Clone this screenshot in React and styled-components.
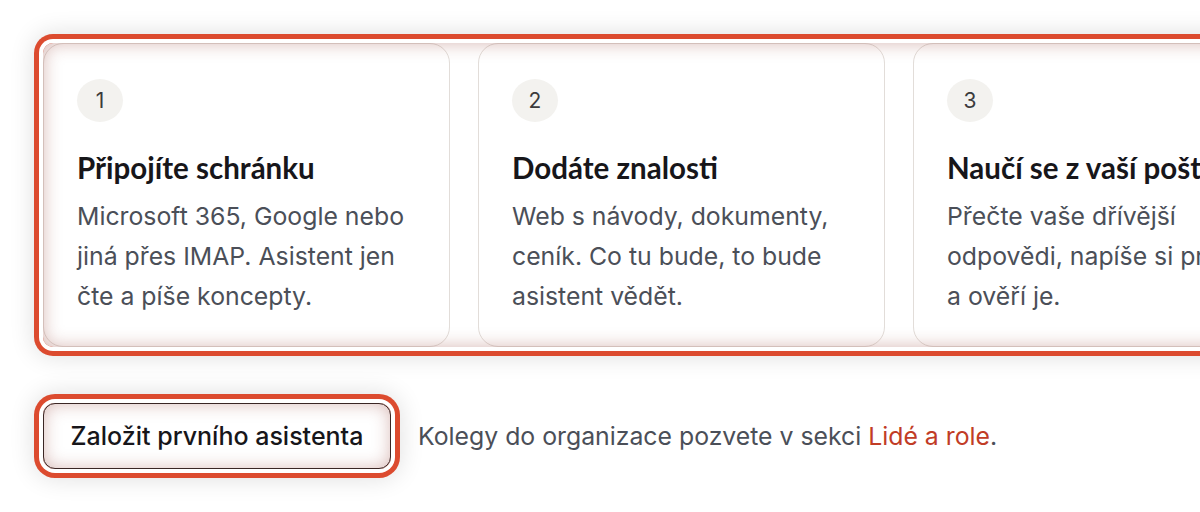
import React from "react";
import styled, { createGlobalStyle } from "styled-components";

const Global = createGlobalStyle`
  html, body { margin: 0; padding: 0; background: #ffffff; overflow: hidden; }
  body { font-family: Inter, "Noto Sans", sans-serif; width: 1200px; height: 512px; }
`;

const Page = styled.div`
  padding: 43px 0 0 43px;
  display: flex;
  flex-direction: column;
  gap: 56px;
  width: 1400px;
`;

const Highlight = styled.div`
  position: relative;
  border-radius: ${(p) => p.$radius || 10}px;
  box-shadow: 0 0 0 4px #ffffff, 0 0 0 9px #dc4b2f, 0 0 24px 10px rgba(0, 0, 0, 0.12);
  &::after {
    content: "";
    position: absolute;
    inset: 0;
    border-radius: inherit;
    pointer-events: none;
    box-shadow: inset 0 0 18px rgba(140, 50, 40, 0.36);
  }
`;

const Steps = styled(Highlight)`
  display: grid;
  grid-template-columns: repeat(3, 407px);
  gap: 28px;
  width: max-content;
`;

const Card = styled.div`
  background: #ffffff;
  border: 1px solid #e2ddd9;
  border-radius: 20px;
  padding: 35px 33px 30px;
  height: 304px;
  box-sizing: border-box;
  display: flex;
  flex-direction: column;
`;

const Num = styled.div`
  width: 46px;
  height: 46px;
  border-radius: 50%;
  background: #f3f2ef;
  display: flex;
  align-items: center;
  justify-content: center;
  font-size: 21px;
  color: #3b3b3d;
  font-family: Inter, sans-serif;
`;

const Title = styled.h3`
  margin: 28px 0 0;
  font-family: Lato, "Noto Sans", sans-serif;
  font-weight: 700;
  font-size: 29.5px;
  line-height: 36px;
  color: #17161a;
  white-space: nowrap;
`;

const Text = styled.p`
  margin: 10px 0 0;
  font-size: 24.8px;
  line-height: 40px;
  color: #4b4f58;
`;

const Footer = styled.div`
  display: flex;
  align-items: center;
  gap: 27px;
`;

const ButtonWrap = styled(Highlight)`
  border-radius: 12px;
`;

const Button = styled.button`
  display: block;
  height: 66px;
  width: 348px;
  padding: 0;
  border: 1.5px solid #2a2525;
  border-radius: 12px;
  background: #ffffff;
  font-family: Inter, sans-serif;
  font-weight: 500;
  font-size: 25px;
  color: #17161a;
  cursor: pointer;
`;

const Note = styled.p`
  margin: 0;
  font-size: 24.8px;
  color: #4b4f58;
`;

const Link = styled.a`
  color: #c13c26;
  text-decoration: none;
`;

const steps = [
  {
    n: 1,
    title: "Připojíte schránku",
    text: "Microsoft 365, Google nebo jiná přes IMAP. Asistent jen čte a píše koncepty.",
  },
  {
    n: 2,
    title: "Dodáte znalosti",
    text: "Web s návody, dokumenty, ceník. Co tu bude, to bude asistent vědět.",
  },
  {
    n: 3,
    title: "Naučí se z vaší pošty",
    text: "Přečte vaše dřívější odpovědi, napíše si pravidla a ověří je.",
  },
];

export default function App() {
  return (
    <>
      <Global />
      <Page>
        <Steps $radius={10}>
          {steps.map((s) => (
            <Card key={s.n}>
              <Num>{s.n}</Num>
              <Title>{s.title}</Title>
              <Text>{s.text}</Text>
            </Card>
          ))}
        </Steps>
        <Footer>
          <ButtonWrap>
            <Button>Založit prvního asistenta</Button>
          </ButtonWrap>
          <Note>
            Kolegy do organizace pozvete v sekci <Link href="#">Lidé a role</Link>.
          </Note>
        </Footer>
      </Page>
    </>
  );
}
